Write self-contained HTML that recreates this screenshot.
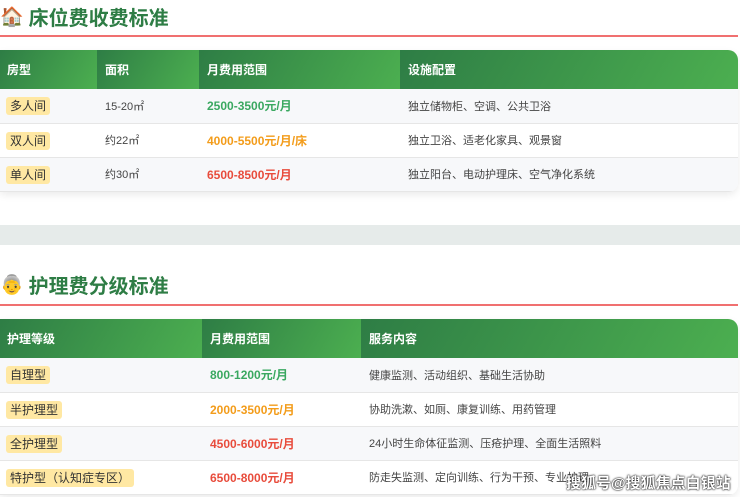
<!DOCTYPE html>
<html><head><meta charset="utf-8"><style>
*{margin:0;padding:0;box-sizing:border-box}
body{width:740px;height:497px;overflow:hidden;background:#fff;font-family:"Liberation Sans","Noto Sans CJK SC",sans-serif;position:relative}
.t{position:absolute;left:0;font-size:20px;font-weight:bold;color:#2e7d45;display:flex;align-items:center;gap:5px}
.line{position:absolute;left:0;width:738px;height:2px;background:#f07070}
table{position:absolute;left:0;width:738px;border-collapse:collapse;font-size:11px;color:#444;box-shadow:0 3px 8px rgba(0,0,0,.08);border-radius:0 10px 10px 0;overflow:hidden}
th{height:39px;text-align:left;padding-left:8px;color:#fff;font-weight:bold;font-size:12px;background:linear-gradient(120deg,#2e7d45,#4caf50)}
th:first-child{padding-left:7px}
td{height:34px;padding-left:8px;border-bottom:1px solid #e6e6e6}
tr:nth-child(even) td{background:#f7f8fa}
tr:nth-child(odd) td{background:#fff}
.b{background:#ffe8a3;border-radius:3px;padding:2px 4px;color:#333;font-size:12px}
td:first-child{padding-left:6px}
.g,.o,.r{font-size:12px;font-weight:bold}
.g{color:#3aa860}.o{color:#f39c1a}.r{color:#e84c3c}
.band{position:absolute;left:0;top:225px;width:740px;height:20px;background:#e6ebea}
.wm{position:absolute;left:566px;top:472px;color:#fff;font-size:15px;font-weight:bold;text-shadow:0 0 2px #000,0 0 1px #000}
</style></head><body>
<div class="t" style="top:2px"><span style="font-size:19px">🏠</span>床位费收费标准</div>
<div class="line" style="top:35px"></div>
<table style="top:50px">
<tr><th style="width:97px">房型</th><th style="width:102px">面积</th><th style="width:201px">月费用范围</th><th>设施配置</th></tr>
<tr><td><span class="b">多人间</span></td><td>15-20㎡</td><td class="g">2500-3500元/月</td><td>独立储物柜、空调、公共卫浴</td></tr>
<tr><td><span class="b">双人间</span></td><td>约22㎡</td><td class="o">4000-5500元/月/床</td><td>独立卫浴、适老化家具、观景窗</td></tr>
<tr><td><span class="b">单人间</span></td><td>约30㎡</td><td class="r">6500-8500元/月</td><td>独立阳台、电动护理床、空气净化系统</td></tr>
</table>
<div class="band"></div>
<div class="t" style="top:270px"><span style="font-size:19px">👵</span>护理费分级标准</div>
<div class="line" style="top:304px"></div>
<table style="top:319px">
<tr><th style="width:202px">护理等级</th><th style="width:159px">月费用范围</th><th>服务内容</th></tr>
<tr><td><span class="b">自理型</span></td><td class="g">800-1200元/月</td><td>健康监测、活动组织、基础生活协助</td></tr>
<tr><td><span class="b">半护理型</span></td><td class="o">2000-3500元/月</td><td>协助洗漱、如厕、康复训练、用药管理</td></tr>
<tr><td><span class="b">全护理型</span></td><td class="r">4500-6000元/月</td><td>24小时生命体征监测、压疮护理、全面生活照料</td></tr>
<tr><td><span class="b">特护型（认知症专区）</span></td><td class="r">6500-8000元/月</td><td>防走失监测、定向训练、行为干预、专业护理</td></tr>
</table>
<div class="wm">搜狐号@搜狐焦点白银站</div>
</body></html>
